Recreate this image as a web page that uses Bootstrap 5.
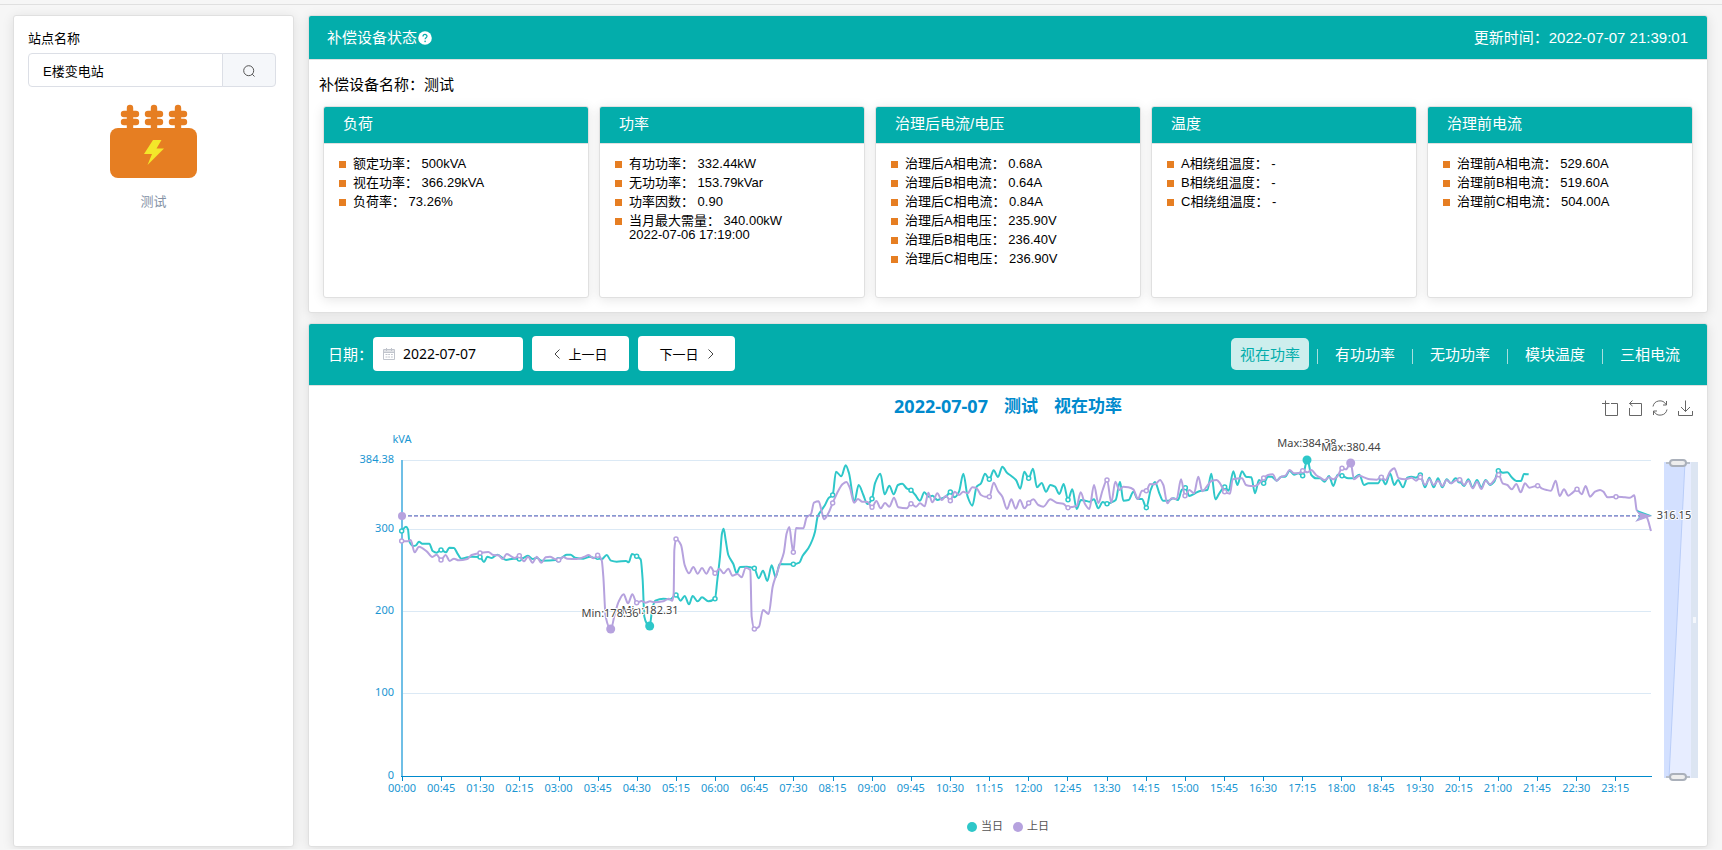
<!DOCTYPE html>
<html lang="zh-CN">
<head>
<meta charset="utf-8">
<meta name="viewport" content="width=device-width, initial-scale=1">
<title>补偿设备状态</title>
<link rel="stylesheet" href="https://cdn.jsdelivr.net/npm/bootstrap@5.3.0/dist/css/bootstrap.min.css">
<style>
  :root { --teal: #03adab; --line: #e0e0e0; --orange: #e67e22; }
  body { background: #f6f6f6; color: #000; font: 13px/14px "Liberation Sans", "Noto Sans CJK SC", sans-serif; }
  .top-rule { height: 5px; border-bottom: 1px solid var(--line); }
  .page { padding: 10px 14px 2px 13px; gap: 14px; }
  .site-panel { flex: 0 0 281px; }
  .panel { border: 1px solid var(--line); border-radius: 3px; background: #fff; box-shadow: 0 2px 12px rgba(0,0,0,.1); }
  .panel-head { background: var(--teal); color: #fff; font-size: 15px; line-height: 20px; border-bottom: 1px solid var(--line); border-radius: 2px 2px 0 0; }
  .site-panel label { line-height: 18px; margin-bottom: 5px; }
  .site-panel .form-control { height: 34px; font-size: 13px; border-color: #dcdfe6; padding: 0 14px; color: #000; border-radius: 4px; }
  .site-panel .btn { width: 54px; background: #f5f7fa; border: 1px solid #dcdfe6; border-radius: 4px; padding: 0; color: #555; }
  .site-item { color: #8492a6; text-decoration: none; font-size: 13px; line-height: 18px; gap: 15px; }
  .status-head { height: 44px; padding: 0 19px 0 18px; }
  .help-dot { width: 14px; height: 14px; margin-left: 1px; }
  .device-name { font-size: 15px; line-height: 20px; padding: 15px 10px 11px; margin: 0; }
  .metric-grid { display: grid; grid-template-columns: repeat(5, 1fr); gap: 10px; padding: 0 14px 14px; }
  .metric { min-height: 192px; }
  .metric .panel-head { height: 37px; padding: 7px 19px; }
  .metric ul { padding: 13px 15px; gap: 5px; }
  .metric li { padding-left: 14px; background: linear-gradient(var(--orange), var(--orange)) 0 4px / 7px 7px no-repeat; }
  .chart-head { min-height: 62px; padding: 0 18px 2px 19px; font-family: "Noto Sans", "Noto Sans CJK SC", sans-serif; }
  .date-box { width: 150px; height: 34px; background: #fff; border-radius: 4px; padding: 0 10px; margin-right: 9px; }
  .date-box input { border: 0; outline: 0; width: 100px; font-size: 14px; color: #000; padding: 0; }
  .day-btn { width: 97px; height: 35px; background: #fff; border: 0; border-radius: 4px; font-size: 13px; color: #000; padding: 0; gap: 9px; }
  .day-btn + .day-btn { margin-left: 9px; }
  .view-btn { height: 32px; padding: 0 9px; border: 0; border-radius: 5px; background: transparent; color: #fff; font-size: 15px; }
  .view-btn.active { background: #cdeeed; color: var(--teal); }
  .view-sep { width: 1px; height: 15px; margin: 5px 8px 0; background: #a9dedd; }
  .chart-title-row { display: grid; grid-template-columns: 1fr auto 1fr; height: 44px; padding: 9px 14px 0; }
  .chart-title { color: #008acd; font: bold 17px/22px "Noto Sans", "Noto Sans CJK SC", sans-serif; gap: 16px; margin: 0; }
  .chart-title time { font-size: 18px; }
  .toolbox { gap: 9px; padding-top: 5px; }
  .toolbox button { border: 0; background: none; padding: 0; width: 16px; height: 16px; line-height: 0; }
  .chart { width: 100%; height: auto; font: 11px "Noto Sans", "Noto Sans CJK SC", sans-serif; }
  .halo { fill: #444; paint-order: stroke; stroke: #fff; stroke-width: 2px; text-anchor: middle; }
</style>
</head>
<body>
<div class="top-rule"></div>
<div class="page d-flex">
  <aside class="site-panel panel">
    <div style="padding: 14px 17px 14px 14px">
      <label for="site" class="d-block">站点名称</label>
      <div class="input-group flex-nowrap">
        <input id="site" class="form-control" type="text" value="E楼变电站">
        <button class="btn" type="button" aria-label="搜索">
          <svg width="14" height="14" viewBox="0 0 14 14" fill="none" stroke="currentColor"><circle cx="6.7" cy="6.7" r="5"/><path d="M10.2 10.2 12.5 12.5"/></svg>
        </button>
      </div>
    </div>
    <a href="#" class="site-item d-flex flex-column align-items-center">
      <svg width="88" height="74" viewBox="0 0 88 74" style="margin-top: 3px">
        <g stroke="#e67e22" stroke-width="6.4" stroke-linecap="round" fill="none">
          <path d="M20 4V26M14 10H26M14 18H26"/><path d="M44 4V26M38 10H50M38 18H50"/><path d="M68 4V26M62 10H74M62 18H74"/>
        </g>
        <rect x="0" y="24" width="87" height="50" rx="8" fill="#e67e22"/>
        <path d="M43 36H51.500L46.500 44.500H54L37.500 61L42 50H34Z" fill="#f3e72a"/>
      </svg>
      <span>测试</span>
    </a>
  </aside>

  <main class="d-flex flex-column flex-grow-1" style="gap: 10px; min-width: 0">
    <section class="panel">
      <div class="panel-head status-head d-flex justify-content-between align-items-center">
        <span class="d-flex align-items-center">补偿设备状态
          <svg class="help-dot" viewBox="0 0 14 14"><circle cx="7" cy="7" r="6.800" fill="#fff"/><path d="M5 5.500C5 2.700 9.100 2.900 9 5.300 8.900 6.700 7.100 6.700 7.100 8.300" fill="none" stroke="#03adab" stroke-width="1.200"/><circle cx="7.100" cy="10.400" r=".8" fill="#03adab"/></svg>
        </span>
        <span>更新时间：2022-07-07 21:39:01</span>
      </div>
      <p class="device-name">补偿设备名称：测试</p>
      <div class="metric-grid">
        <div class="metric panel">
          <div class="panel-head">负荷</div>
          <ul class="list-unstyled d-flex flex-column mb-0">
            <li>额定功率： 500kVA</li><li>视在功率： 366.29kVA</li><li>负荷率： 73.26%</li>
          </ul>
        </div>
        <div class="metric panel">
          <div class="panel-head">功率</div>
          <ul class="list-unstyled d-flex flex-column mb-0">
            <li>有功功率： 332.44kW</li><li>无功功率： 153.79kVar</li><li>功率因数： 0.90</li><li>当月最大需量： 340.00kW<br>2022-07-06 17:19:00</li>
          </ul>
        </div>
        <div class="metric panel">
          <div class="panel-head">治理后电流/电压</div>
          <ul class="list-unstyled d-flex flex-column mb-0">
            <li>治理后A相电流： 0.68A</li><li>治理后B相电流： 0.64A</li><li>治理后C相电流： 0.84A</li><li>治理后A相电压： 235.90V</li><li>治理后B相电压： 236.40V</li><li>治理后C相电压： 236.90V</li>
          </ul>
        </div>
        <div class="metric panel">
          <div class="panel-head">温度</div>
          <ul class="list-unstyled d-flex flex-column mb-0">
            <li>A相绕组温度： -</li><li>B相绕组温度： -</li><li>C相绕组温度： -</li>
          </ul>
        </div>
        <div class="metric panel">
          <div class="panel-head">治理前电流</div>
          <ul class="list-unstyled d-flex flex-column mb-0">
            <li>治理前A相电流： 529.60A</li><li>治理前B相电流： 519.60A</li><li>治理前C相电流： 504.00A</li>
          </ul>
        </div>
      </div>
    </section>

    <section class="panel">
      <div class="panel-head chart-head d-flex justify-content-between align-items-center">
        <div class="d-flex align-items-center">
          <label for="day">日期：</label>
          <div class="date-box d-flex align-items-center">
            <svg width="12" height="12" viewBox="0 0 12 12" class="me-2 flex-shrink-0" fill="none" stroke="#c0c4cc"><path d="M.5 1.500H11.500V11.500H.5ZM.5 4.500H11.500M3.500 0V3M8.500 0V3M2.500 6.500H4.500M5.200 6.500H7M8 6.500H9.800M2.500 9H4.500M5.200 9H7M8 9H9.800M.5 3H11.500"/></svg>
            <input id="day" type="text" value="2022-07-07">
          </div>
          <button type="button" class="day-btn d-flex align-items-center justify-content-center"><svg width="6" height="10" viewBox="0 0 6 10" fill="none" stroke="#444"><path d="M5.500.5 1 5 5.500 9.500"/></svg>上一日</button>
          <button type="button" class="day-btn d-flex align-items-center justify-content-center">下一日<svg width="6" height="10" viewBox="0 0 6 10" fill="none" stroke="#444"><path d="M.5.5 5 5 .5 9.500"/></svg></button>
        </div>
        <div class="d-flex align-items-center">
          <button type="button" class="view-btn active">视在功率</button><span class="view-sep"></span>
          <button type="button" class="view-btn">有功功率</button><span class="view-sep"></span>
          <button type="button" class="view-btn">无功功率</button><span class="view-sep"></span>
          <button type="button" class="view-btn">模块温度</button><span class="view-sep"></span>
          <button type="button" class="view-btn">三相电流</button>
        </div>
      </div>
      <div class="chart-title-row">
        <span></span>
        <h2 class="chart-title d-flex"><time>2022-07-07</time><span>测试</span><span>视在功率</span></h2>
        <div class="toolbox d-flex justify-content-end">
          <button type="button" aria-label="区域缩放"><svg width="16" height="16" viewBox="0 0 16 16" fill="none" stroke="#666"><path d="M3.500.5V15.500H15.500V3.500H9M0 3.500H7.500"/></svg></button>
          <button type="button" aria-label="缩放还原"><svg width="16" height="16" viewBox="0 0 16 16" fill="none" stroke="#666"><path d="M5.500.5 2.500 3.500 5.500 6M2.500 3.500H14.500V15.500H2.500V8"/></svg></button>
          <button type="button" aria-label="还原"><svg width="16" height="16" viewBox="0 0 16 16" fill="none" stroke="#666"><path d="M1 6.500A7 7 0 0 1 14 4.500M15 9.500A7 7 0 0 1 2 11.500M14.500 1V5H11M1.500 15V11H5"/></svg></button>
          <button type="button" aria-label="下载图片"><svg width="16" height="16" viewBox="0 0 16 16" fill="none" stroke="#666"><path d="M8.500.5V11.500M4 7 8.500 11.500 13 7M1.500 11V15.500H15.500V11"/></svg></button>
        </div>
      </div>
      <svg id="chart" class="chart d-block" viewBox="309 430 1398 416" role="img" aria-label="视在功率曲线"></svg>
    </section>
  </main>
</div>

<script src="https://cdn.jsdelivr.net/npm/bootstrap@5.3.0/dist/js/bootstrap.bundle.min.js"></script>
<script>
// Curve samples as x,y pairs on a grid of thirds of a unit, origin (380, 430)
const today = [65,303,78,290,84,298,88,335,100,348,108,346,117,335,127,341,148,341,158,363,170,368,183,360,198,367,208,353,222,354,232,370,244,386,262,382,275,380,300,381,312,396,322,380,335,384,352,374,378,390,400,386,418,387,430,384,444,377,458,387,470,383,485,392,535,389,550,380,560,374,572,374,585,383,610,386,630,380,645,384,653,382,665,388,680,375,693,392,710,395,738,393,746,397,756,372,770,379,782,388,788,450,793,560,800,580,809,588,817,535,826,512,850,506,870,508,888,495,902,512,914,498,927,523,938,498,953,514,966,502,985,514,1005,506,1012,450,1020,380,1026,310,1031,296,1037,330,1045,375,1060,402,1070,430,1080,411,1100,410,1123,415,1136,445,1149,422,1162,453,1175,406,1187,442,1199,402,1225,403,1240,403,1258,398,1268,377,1285,355,1297,330,1305,305,1313,260,1325,240,1335,225,1345,205,1358,195,1368,125,1384,139,1397,106,1407,130,1423,215,1436,165,1450,195,1462,222,1476,206,1485,160,1501,131,1514,193,1528,167,1541,193,1554,165,1567,161,1580,175,1593,181,1606,195,1620,212,1633,187,1646,200,1658,197,1672,210,1685,205,1698,200,1711,186,1724,202,1737,185,1750,131,1763,200,1777,227,1790,170,1803,160,1815,131,1828,148,1841,121,1854,141,1867,110,1881,128,1894,138,1908,150,1921,176,1933,125,1946,145,1959,116,1971,172,1985,159,1998,185,2011,165,2025,170,2038,192,2051,162,2064,209,2077,178,2090,237,2103,210,2116,212,2129,215,2142,208,2155,235,2168,216,2181,221,2194,217,2207,210,2220,155,2230,212,2246,210,2260,185,2273,207,2286,207,2299,233,2312,180,2325,156,2338,190,2349,212,2365,212,2380,205,2394,210,2405,180,2416,173,2428,198,2445,190,2460,183,2482,180,2494,131,2506,208,2518,190,2534,171,2546,182,2560,124,2572,165,2586,124,2598,140,2614,142,2625,190,2637,150,2651,160,2664,140,2675,140,2690,152,2704,140,2716,140,2729,122,2742,134,2755,130,2768,137,2782,88,2794,135,2808,145,2820,145,2834,155,2847,138,2860,168,2873,134,2886,137,2905,145,2920,145,2938,134,2952,165,2965,160,2980,160,2995,160,3004,143,3017,163,3030,130,3043,165,3054,150,3069,172,3082,143,3095,140,3108,143,3121,135,3135,172,3148,143,3161,172,3174,145,3187,172,3200,148,3213,160,3226,145,3239,152,3252,168,3265,148,3278,172,3291,150,3304,172,3317,150,3330,165,3343,155,3355,122,3368,128,3382,127,3395,142,3409,153,3423,153,3432,132,3446,133];
const yesterday = [65,333,82,334,92,330,104,367,117,350,140,364,157,381,170,374,183,390,197,375,209,393,222,386,236,391,262,387,275,375,300,369,325,366,340,375,355,376,368,387,380,372,404,384,418,377,432,394,444,380,458,398,470,380,484,398,497,382,510,380,524,387,536,390,550,381,562,386,590,387,612,381,626,375,640,385,653,376,665,390,670,440,677,560,692,598,705,550,716,515,731,493,744,520,757,493,770,518,785,513,797,518,810,514,825,517,850,514,866,506,877,512,881,490,883,360,888,327,903,345,914,405,927,430,940,411,953,431,966,414,979,431,992,411,1005,430,1018,416,1031,430,1045,416,1057,437,1072,432,1085,442,1097,413,1111,420,1115,560,1123,597,1137,590,1149,540,1166,552,1178,470,1187,440,1199,405,1211,370,1220,310,1228,291,1235,340,1240,367,1248,294,1270,295,1280,262,1293,252,1302,218,1316,214,1324,240,1332,268,1345,250,1358,219,1375,182,1388,162,1399,156,1410,175,1422,218,1434,207,1446,215,1463,216,1476,232,1489,213,1502,235,1515,219,1528,230,1542,203,1555,232,1580,235,1593,221,1608,230,1620,220,1634,229,1645,188,1657,217,1672,190,1685,210,1698,197,1711,212,1724,185,1737,195,1750,185,1763,190,1777,172,1790,175,1803,195,1815,200,1828,200,1841,158,1854,183,1867,200,1881,237,1894,208,1907,236,1920,210,1933,235,1946,219,1960,208,1975,225,1990,230,2011,208,2030,218,2050,221,2064,233,2080,230,2090,228,2102,187,2115,222,2128,237,2142,165,2155,219,2168,180,2181,150,2194,218,2206,155,2218,180,2230,170,2245,172,2260,178,2274,207,2286,182,2299,182,2310,162,2325,163,2340,150,2350,165,2362,220,2375,205,2390,207,2403,148,2415,197,2428,180,2442,190,2455,140,2467,184,2480,170,2494,153,2510,150,2520,160,2534,185,2550,191,2558,148,2586,145,2598,165,2612,168,2625,168,2638,160,2651,144,2664,135,2678,133,2690,152,2704,140,2716,137,2729,120,2742,130,2755,130,2768,122,2782,127,2794,120,2808,135,2821,143,2834,150,2847,142,2860,148,2873,138,2886,115,2898,118,2912,98,2922,148,2938,137,2952,142,2970,148,2990,149,3004,142,3017,150,3030,125,3043,115,3056,145,3075,148,3095,143,3108,152,3121,142,3135,165,3148,148,3161,165,3174,152,3187,168,3200,150,3213,160,3226,152,3239,149,3252,165,3265,152,3278,175,3291,155,3304,177,3317,152,3330,163,3343,150,3356,134,3368,160,3382,165,3395,178,3409,162,3422,187,3435,160,3448,173,3473,167,3485,175,3500,180,3513,182,3527,152,3539,198,3552,178,3565,197,3578,188,3591,178,3605,193,3617,168,3630,200,3645,185,3660,180,3670,185,3683,202,3708,200,3735,202,3750,203,3763,196,3770,240,3782,252,3800,262,3813,303];
const TEAL = '#2ec7c9', PURPLE = '#b6a2de', BLUE = '#008acd', LABEL = '#1a96d2';
const points = flat => { const p = []; for (let i = 0; i < flat.length; i += 2) p.push([380 + flat[i] / 3, 430 + flat[i + 1] / 3]); return p; };

// Monotone cubic interpolation, flat at each local extreme
function curve(p) {
  const n = p.length, s = [], m = [];
  for (let i = 0; i < n - 1; i++) s.push((p[i+1][1] - p[i][1]) / (p[i+1][0] - p[i][0]));
  for (let i = 0; i < n; i++) {
    if (i === 0) m.push(s[0]);
    else if (i === n - 1) m.push(s[n-2]);
    else m.push(s[i-1] * s[i] <= 0 ? 0 : 2 * s[i-1] * s[i] / (s[i-1] + s[i]));
  }
  let d = `M${p[0][0]} ${p[0][1]}`;
  for (let i = 0; i < n - 1; i++) {
    const h = (p[i+1][0] - p[i][0]) / 3;
    d += `C${p[i][0]+h} ${p[i][1]+m[i]*h} ${p[i+1][0]-h} ${p[i+1][1]-m[i+1]*h} ${p[i+1][0]} ${p[i+1][1]}`;
  }
  return d;
}
const tickX = k => 402 + k * 39.14;
function series(flat, color, lastTick) {
  const p = points(flat);
  let out = `<path d="${curve(p)}" fill="none" stroke="${color}" stroke-width="2" stroke-linejoin="round"/>`;
  for (let k = 0; k <= lastTick; k++) {
    const q = p.reduce((a, b) => Math.abs(b[0] - tickX(k)) < Math.abs(a[0] - tickX(k)) ? b : a);
    out += `<circle cx="${q[0]}" cy="${q[1]}" r="2" fill="#fff" stroke="${color}" stroke-width="1.5"/>`;
  }
  return out;
}
let g = '';
for (const [label, y] of [['384.38', 460], ['300', 529], ['200', 611], ['100', 693], ['0', 776]]) {
  if (y < 776) g += `<path d="M402 ${y + .5}H1651" stroke="#dbe9f5"/>`;
  g += `<text x="394" y="${y + 3}" text-anchor="end" fill="${LABEL}">${label}</text>`;
}
g += `<text x="402" y="443" text-anchor="middle" fill="${LABEL}">kVA</text>`;
g += `<path d="M402 460V777" stroke="#6fbfe6" stroke-width="2"/><path d="M401 776.5H1652" stroke="${BLUE}"/>`;
for (let k = 0; k <= 31; k++) {
  const min = k * 45, t = String(Math.floor(min / 60)).padStart(2, '0') + ':' + String(min % 60).padStart(2, '0');
  g += `<path d="M${Math.round(tickX(k)) + .5} 777V781" stroke="${BLUE}"/><text x="${tickX(k)}" y="792" text-anchor="middle" fill="${LABEL}">${t}</text>`;
}
// Range slider beside the plot
g += `<rect x="1664" y="462" width="27" height="316" fill="#e7edff"/><rect x="1691" y="462" width="7" height="316" fill="#dce5f2"/>
<path d="M1664 462H1685L1669 778H1664Z" fill="#d3e0ff"/><path d="M1685 462 1669 778" stroke="#b9cdf8"/><rect x="1693" y="617" width="3" height="6" fill="#f4f7fc"/>`;
for (const y of [463, 777]) g += `<path d="M1666 ${y}H1690" stroke="#b8bfca" stroke-width="2"/><rect x="1670" y="${y - 3}" width="16" height="6" rx="3" fill="#eee" stroke="#aab0ba" stroke-width="2"/>`;

g += series(today, TEAL, 28) + series(yesterday, PURPLE, 31);
// Average line: both series share it, so the two dash patterns lie over each other
g += `<path d="M402 515.5H1640" stroke="${TEAL}" stroke-dasharray="4 2"/><path d="M402 516H1640" stroke="#a08fd2" stroke-width="1.5" stroke-dasharray="4 2"/>
<path d="M1637 510 1652 515.500 1636 521 1640 515.500Z" fill="${TEAL}"/><path d="M1637 511.500 1652 516 1635 522 1640 516.500Z" fill="${PURPLE}"/>
<circle cx="402" cy="516" r="4" fill="${PURPLE}"/>`;
for (const [x, y, c] of [[649.7, 626, TEAL], [610.7, 629, PURPLE], [1307, 460, TEAL], [1350.7, 463, PURPLE]]) g += `<circle cx="${x}" cy="${y}" r="4.5" fill="${c}"/>`;
g += `<text class="halo" x="650" y="614">Min:182.31</text><text class="halo" x="610" y="617">Min:178.36</text>
<text class="halo" x="1307" y="447">Max:384.38</text><text class="halo" x="1351" y="451">Max:380.44</text><text class="halo" x="1674" y="519">316.15</text>`;
g += `<circle cx="972" cy="827" r="5" fill="${TEAL}"/><text x="981" y="830" fill="#555">当日</text><circle cx="1018" cy="827" r="5" fill="${PURPLE}"/><text x="1027" y="830" fill="#555">上日</text>`;
document.getElementById('chart').innerHTML = g;
</script>
</body>
</html>
